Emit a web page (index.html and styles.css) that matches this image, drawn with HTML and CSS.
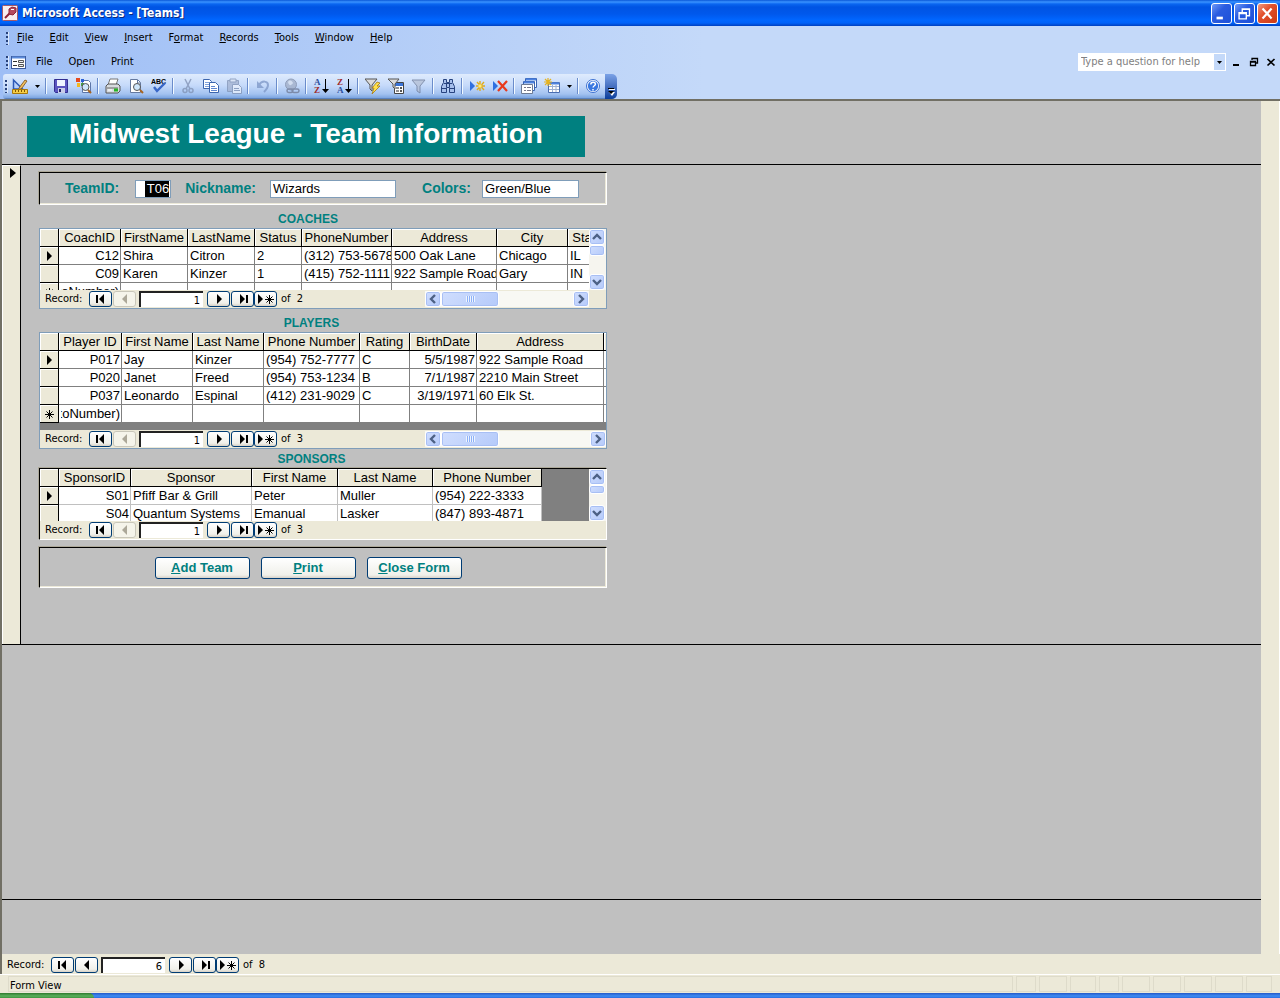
FILE: index.html
```html
<!DOCTYPE html>
<html lang="en">
<head>
<meta charset="utf-8">
<title>Microsoft Access - [Teams]</title>
<link rel="stylesheet" href="styles.css">
</head>
<body>
<svg class="defs" aria-hidden="true">
  <symbol id="first" viewBox="0 0 12 10"><path d="M1 1h2v8H1zM9 0v10L4 5z"/></symbol>
  <symbol id="prev" viewBox="0 0 12 10"><path d="M8 0v10L3 5z"/></symbol>
  <symbol id="next" viewBox="0 0 12 10"><path d="M4 0v10l5-5z"/></symbol>
  <symbol id="last" viewBox="0 0 12 10"><path d="M3 0v10l5-5zM9 1h2v8H9z"/></symbol>
  <symbol id="new" viewBox="0 0 18 10"><path d="M1 0v10l5-5z"/><path d="M12.500 1v9M8 5.500h9M9.500 2.500l6 6M15.500 2.500l-6 6" fill="none" stroke="#000"/></symbol>
  <symbol id="star" viewBox="0 0 12 10"><path d="M6.500 1v9M2 5.500h9M3.500 2.500l6 6M9.500 2.500l-6 6" fill="none" stroke="#000"/></symbol>
  <symbol id="up" viewBox="0 0 10 10"><path d="M1 7l4-4 4 4" fill="none" stroke="#4d6185" stroke-width="2.4"/></symbol>
  <symbol id="down" viewBox="0 0 10 10"><path d="M1 3l4 4 4-4" fill="none" stroke="#4d6185" stroke-width="2.4"/></symbol>
  <symbol id="left" viewBox="0 0 10 10"><path d="M7 1L3 5l4 4" fill="none" stroke="#4d6185" stroke-width="2.4"/></symbol>
  <symbol id="right" viewBox="0 0 10 10"><path d="M3 1l4 4-4 4" fill="none" stroke="#4d6185" stroke-width="2.4"/></symbol>
  <symbol id="drop" viewBox="0 0 5 3"><path d="M0 0h5L2.500 3z"/></symbol>
  <symbol id="funnel" viewBox="0 0 16 16"><path d="M1 2h13L9 8v7l-3-2V8z" stroke-width="1"/></symbol>
</svg>

<header class="titlebar">
  <svg class="app-icon" viewBox="0 0 16 16"><rect x=".5" y=".5" width="15" height="15" rx="1" fill="#f7eef0" stroke="#a55a68"/><path d="M8 8l-5 5" stroke="#8e2238" stroke-width="2"/><path d="M7 4l3-2 4 1v4l-3 3-4-1z" fill="#b44a5e" stroke="#8e2238"/><path d="M9 4.500h3" stroke="#fff"/></svg>
  <h1 class="window-title">Microsoft Access - [Teams]</h1>
  <div class="window-buttons">
    <button class="win" aria-label="Minimize"><svg viewBox="0 0 21 21"><path d="M5 14h7v3H5z" fill="#fff"/></svg></button>
    <button class="win" aria-label="Restore"><svg viewBox="0 0 21 21"><path d="M8 9V5.500h8V13h-3M8 6h8M4.500 9.500h8v7h-8zM4 10.500h9" fill="none" stroke="#fff" stroke-width="1.500"/></svg></button>
    <button class="win close" aria-label="Close"><svg viewBox="0 0 21 21"><path d="M5 5l10 11M15 5L5 16" stroke="#fff" stroke-width="2.400"/></svg></button>
  </div>
</header>

<div class="bars">
  <nav class="menu">
    <span class="grip"></span>
    <button><u>F</u>ile</button><button><u>E</u>dit</button><button><u>V</u>iew</button><button><u>I</u>nsert</button><button>F<u>o</u>rmat</button><button><u>R</u>ecords</button><button><u>T</u>ools</button><button><u>W</u>indow</button><button><u>H</u>elp</button>
  </nav>
  <nav class="menu second">
    <span class="grip"></span>
    <svg class="form-icon" viewBox="0 0 15 13"><rect x=".5" y=".5" width="14" height="12" fill="#fff" stroke="#3c5a9c"/><path d="M1 1.500h13" stroke="#5c8cdc" stroke-width="2"/><path d="M2 5.500h4M2 9.500h4" stroke="#333"/><path d="M7.500 4.500h5v2h-5zM7.500 8.500h5v2h-5z" fill="#eee" stroke="#555"/></svg>
    <button>File</button><button>Open</button><button>Print</button>
    <div class="help-box"><input type="text" aria-label="Help question" placeholder="Type a question for help"><button aria-label="Show questions"><svg class="drop"><use href="#drop"/></svg></button></div>
    <div class="doc-buttons">
      <button aria-label="Minimize form"><svg viewBox="0 0 10 10"><path d="M1 7h6v2H1z"/></svg></button>
      <button aria-label="Restore form"><svg viewBox="0 0 10 10"><path d="M3 3V1.500h5.500V6H7M3 1.500h6M1.500 4.500h5v4h-5zM1 5h6" fill="none" stroke="#000" stroke-width="1.300"/></svg></button>
      <button aria-label="Close form"><svg viewBox="0 0 10 10"><path d="M1.500 2l7 6.500M8.500 2l-7 6.500" stroke="#000" stroke-width="1.700"/></svg></button>
    </div>
  </nav>
  <div class="toolrow">
    <div class="toolbar">
      <span class="grip"></span>
      <button aria-label="Design view"><svg viewBox="0 0 16 16"><path d="M1.500 2v9h9z" fill="#b8d0f8" stroke="#2c58b8" stroke-width="1.500"/><path d="M7 10l6-8 2 1-5 7-3 2z" fill="#f0c060" stroke="#7a4a10" stroke-width=".8"/><path d="M.5 11.500h15v4H.5z" fill="#f5cd45" stroke="#a87808"/><path d="M3.500 12v2M6.500 12v2M9.500 12v2M12.500 12v2" stroke="#805500"/></svg></button>
      <button class="arrow" aria-label="View choices"><svg class="drop"><use href="#drop"/></svg></button>
      <span class="sep"></span>
      <button aria-label="Save"><svg viewBox="0 0 16 16"><path d="M1.500 1.500h13v13h-12l-1-1z" fill="#5a55c0" stroke="#332e91"/><path d="M4 2h8v6H4z" fill="#eef3ff"/><path d="M5 10h7v5H5z" fill="#c8cce8"/><path d="M6 11h2v3H6z" fill="#28246c"/></svg></button>
      <button aria-label="File search"><svg viewBox="0 0 16 16"><path d="M6.500 2.500h6l2 2v10h-8z" fill="#fff" stroke="#5d76a8"/><path d="M0 0h4v4H0z" fill="#e64a1e"/><path d="M5 1h3v3H5z" fill="#2c62d4"/><path d="M1 5h3v4H1z" fill="#f3b91f"/><path d="M5 5h3v3H5z" fill="#46a045"/><circle cx="9.500" cy="9" r="3.500" fill="#cfe6fb" stroke="#555"/><path d="M12 12l3 3" stroke="#a66420" stroke-width="2"/></svg></button>
      <span class="sep"></span>
      <button aria-label="Print"><svg viewBox="0 0 16 16"><path d="M5 1h8l-2 6H3z" fill="#fff" stroke="#777"/><path d="M1 8l2-2h10l2 2v5l-2 2H1z" fill="#d7dbdf" stroke="#555"/><path d="M2 10h11" stroke="#666"/><path d="M9 12h4" stroke="#27b427" stroke-width="3"/><path d="M3 12h4" stroke="#fff"/></svg></button>
      <button aria-label="Print preview"><svg viewBox="0 0 16 16"><path d="M2.500 1.500h7l3 3v10h-10z" fill="#fff" stroke="#65799f"/><path d="M9.500 2v3h3" fill="none" stroke="#65799f"/><circle cx="9" cy="9" r="3.500" fill="#cfe6fb" stroke="#555"/><path d="M12 12l3 3" stroke="#a66420" stroke-width="2"/></svg></button>
      <button aria-label="Spelling"><svg viewBox="0 0 16 16"><text x="0" y="6" class="abc">ABC</text><path d="M3 9l3 4 8-8" fill="none" stroke="#3867c8" stroke-width="2.400"/></svg></button>
      <span class="sep"></span>
      <button class="off" aria-label="Cut"><svg viewBox="0 0 16 16" fill="none" stroke="#7f90b2" stroke-width="1.500"><path d="M5 1l5 10M11 1L6 11"/><circle cx="5" cy="12.500" r="2"/><circle cx="11" cy="12.500" r="2"/></svg></button>
      <button aria-label="Copy"><svg viewBox="0 0 16 16" fill="#fff" stroke="#3c65ad"><path d="M.5 1.500h6l2 2v7h-8z"/><path d="M2 4.500h4M2 6.500h5M2 8.500h4" stroke="#7fa1dc"/><path d="M6.500 4.500h6l3 3v7h-9z"/><path d="M8 8.500h4M8 10.500h6M8 12.500h6" stroke="#5f87d0"/></svg></button>
      <button class="off" aria-label="Paste"><svg viewBox="0 0 16 16" stroke="#7f90b2"><path d="M1.500 2.500h11v11h-11z" fill="#a3b2cf"/><path d="M4 1h6v3H4z" fill="#dde5f3"/><path d="M6.500 6.500h6l3 3v6h-9z" fill="#edf2fb"/><path d="M8 10.500h5M8 12.500h6"/></svg></button>
      <span class="sep"></span>
      <button class="off" aria-label="Undo"><svg viewBox="0 0 16 16"><path d="M4 7c3-5 9-4 9 0 0 3-2 5-4 7" fill="none" stroke="#7c96c6" stroke-width="2"/><path d="M2 3v7h7z" fill="#7c96c6"/></svg></button>
      <span class="sep"></span>
      <button class="off" aria-label="Hyperlink"><svg viewBox="0 0 16 16"><circle cx="7" cy="6.500" r="5.500" fill="#a0adc6" stroke="#7c89a5"/><path d="M4 4c2-3 4-1 5 1-2 3-4 3-5-1" fill="#d5deed"/><g fill="none" stroke="#6d7791" stroke-width="1.500"><rect x="3" y="11" width="6" height="3.500" rx="1.700"/><rect x="8" y="11" width="7" height="3.500" rx="1.700"/></g></svg></button>
      <span class="sep"></span>
      <button aria-label="Sort ascending"><svg class="sort" viewBox="0 0 16 18"><text x="1" y="8" class="letter blue">A</text><text x="1" y="16" class="letter red">Z</text><path d="M12 2v10h-3l3.500 4L16 12h-3V2z"/></svg></button>
      <button aria-label="Sort descending"><svg class="sort" viewBox="0 0 16 18"><text x="1" y="8" class="letter red">Z</text><text x="1" y="16" class="letter blue">A</text><path d="M12 2v10h-3l3.500 4L16 12h-3V2z"/></svg></button>
      <span class="sep"></span>
      <button aria-label="Filter by selection"><svg viewBox="0 0 16 16"><path d="M0 1h12L7 7v6l-2-2V7z" fill="#dcdcdc" stroke="#555"/><path d="M12 4l3 1-3 3h3l-8 8 2-6H7z" fill="#ffe14a" stroke="#a87b12" stroke-width=".8"/></svg></button>
      <button aria-label="Filter by form"><svg viewBox="0 0 16 16"><path d="M6.500 4.500h9v11h-9z" fill="#fff" stroke="#444"/><path d="M7 5h8v3H7z" fill="#3973d8"/><path d="M8 10h3M8 13h3" stroke="#222"/><path d="M12 9h2v2h-2zM12 12h2v2h-2z" fill="#555"/><path d="M0 1h11L7 6v5L5 9V6z" fill="#dcdcdc" stroke="#555"/></svg></button>
      <button class="off" aria-label="Apply filter"><svg viewBox="0 0 16 16" fill="#b4bfd4" stroke="#6b7895"><use href="#funnel"/></svg></button>
      <span class="sep"></span>
      <button aria-label="Find"><svg viewBox="0 0 16 16" fill="#a6bfec" stroke="#27437f"><path d="M3.500 1.500h3v3h3v-3h3v3l2 4v6h-5v-5h-3v5h-5v-6l2-4z"/><path d="M2 10.500h4M10 10.500h4M4 5.500h8M6.500 9V5M9.500 9V5"/></svg></button>
      <span class="sep"></span>
      <button aria-label="New record"><svg viewBox="0 0 16 16"><path d="M1 3v10l5-5z" fill="#2f6fe0"/><path d="M11 3v10M7 8h9M8 4l7 8M15 4l-7 8" stroke="#e0ac1c" stroke-width="1.400"/><path d="M9.500 6.500h3v3h-3z" fill="#ffe97a"/></svg></button>
      <button aria-label="Delete record"><svg viewBox="0 0 16 16"><path d="M1 3v10l5-5z" fill="#2f6fe0"/><path d="M6 3l9 10M15 3L6 13" stroke="#e8391e" stroke-width="2.200"/></svg></button>
      <span class="sep"></span>
      <button aria-label="Database window"><svg viewBox="0 0 16 16" fill="#fff" stroke="#3964b4"><path d="M4.500.5h11v9h-11z"/><path d="M5 1.500h10" stroke="#4d82e0" stroke-width="2"/><path d="M2.500 3.500h11v9h-11z"/><path d="M.5 6.500h11v9H.5z" stroke="#6d7b94"/><path d="M3 4.500h10" stroke="#4d82e0" stroke-width="2"/><path d="M3 9.500h2M6 9.500h4M3 12.500h2M6 12.500h4" stroke="#778"/></svg></button>
      <button aria-label="New object"><svg viewBox="0 0 16 16"><path d="M4.500 4.500h11v10h-11z" fill="#fff" stroke="#4a6db0"/><path d="M5 5.500h10" stroke="#4d82e0" stroke-width="2"/><path d="M5 8.500h10M5 11.500h10M8.500 7v7M12 7v7" stroke="#9eb0d0"/><path d="M4 0v8M0 4h8M1 1l6 6M7 1L1 7" stroke="#e6b321" stroke-width="1.200"/></svg></button>
      <button class="arrow" aria-label="Object choices"><svg class="drop"><use href="#drop"/></svg></button>
      <span class="sep"></span>
      <button aria-label="Help"><svg viewBox="0 0 16 16"><circle cx="8" cy="8" r="6.500" fill="#fff" stroke="#3a6fd0"/><circle cx="8" cy="8" r="5.200" fill="#3a78e0"/><path d="M5.800 6.500c0-3 4.600-3 4.600-.3 0 1.500-2.300 1.600-2.300 3.300M8 11v1.600" fill="none" stroke="#fff" stroke-width="1.500"/></svg></button>
      <button class="cap" aria-label="Toolbar options"><svg viewBox="0 0 7 8"><path d="M1 1h6v1H1zM1 4h6L4 8z" fill="#fff"/><path d="M0 0h6v1H0zM0 3h6L3 6z"/></svg></button>
    </div>
  </div>
</div>

<main class="workspace">
  <div class="canvas">
    <section class="form-header"><h2 class="banner">Midwest League - Team Information</h2></section>
    <section class="detail">
      <div class="selector"><svg viewBox="0 0 12 10"><path d="M4 0v10l6-5z"/></svg></div>
      <form class="team">
        <div class="panel fields">
          <label for="team-id">TeamID:</label>
          <span class="field id"><input id="team-id" value="T06"></span>
          <label for="nick">Nickname:</label>
          <input class="field nick" id="nick" value="Wizards">
          <label for="colors">Colors:</label>
          <input class="field colors" id="colors" value="Green/Blue">
        </div>

        <h3>COACHES</h3>
        <div class="sub coaches">
          <div class="sheet">
            <div class="clip">
              <table>
                <colgroup><col class="c19"><col class="c62"><col class="c67"><col class="c67"><col class="c47"><col class="c90"><col class="c105"><col class="c71"><col class="c40"></colgroup>
                <tr><th></th><th>CoachID</th><th>FirstName</th><th>LastName</th><th>Status</th><th>PhoneNumber</th><th>Address</th><th>City</th><th>State</th></tr>
                <tr><th><svg class="mark"><use href="#next"/></svg></th><td class="num">C12</td><td>Shira</td><td>Citron</td><td>2</td><td>(312) 753-5678</td><td>500 Oak Lane</td><td>Chicago</td><td>IL</td></tr>
                <tr><th></th><td class="num">C09</td><td>Karen</td><td>Kinzer</td><td>1</td><td>(415) 752-1111</td><td>922 Sample Road</td><td>Gary</td><td>IN</td></tr>
                <tr><th><svg class="mark"><use href="#star"/></svg></th><td class="num"><span class="auto">(AutoNumber)</span></td><td></td><td></td><td></td><td></td><td></td><td></td><td></td></tr>
              </table>
            </div>
            <div class="vscroll"><button type="button" aria-label="Scroll up"><svg><use href="#up"/></svg></button><span class="thumb"></span><button type="button" class="end" aria-label="Scroll down"><svg><use href="#down"/></svg></button></div>
          </div>
          <div class="nav">
            <label for="rec1">Record:</label>
            <button type="button" aria-label="First"><svg><use href="#first"/></svg></button><button type="button" disabled aria-label="Previous"><svg><use href="#prev"/></svg></button>
            <input id="rec1" value="1">
            <button type="button" aria-label="Next"><svg><use href="#next"/></svg></button><button type="button" aria-label="Last"><svg><use href="#last"/></svg></button><button type="button" class="new" aria-label="New"><svg><use href="#new"/></svg></button>
            <span class="of">of&nbsp; 2</span>
            <div class="hscroll"><button type="button" aria-label="Scroll left"><svg><use href="#left"/></svg></button><span class="thumb"></span><button type="button" class="end" aria-label="Scroll right"><svg><use href="#right"/></svg></button></div>
          </div>
        </div>

        <h3>PLAYERS</h3>
        <div class="sub players">
          <div class="sheet">
            <div class="clip">
              <table>
                <colgroup><col class="c19"><col class="c63"><col class="c71"><col class="c71"><col class="c96"><col class="c50"><col class="c67"><col class="c127"><col class="c50"></colgroup>
                <tr><th></th><th>Player ID</th><th>First Name</th><th>Last Name</th><th>Phone Number</th><th>Rating</th><th>BirthDate</th><th>Address</th><th></th></tr>
                <tr><th><svg class="mark"><use href="#next"/></svg></th><td class="num">P017</td><td>Jay</td><td>Kinzer</td><td>(954) 752-7777</td><td>C</td><td class="num">5/5/1987</td><td>922 Sample Road</td><td></td></tr>
                <tr><th></th><td class="num">P020</td><td>Janet</td><td>Freed</td><td>(954) 753-1234</td><td>B</td><td class="num">7/1/1987</td><td>2210 Main Street</td><td></td></tr>
                <tr><th></th><td class="num">P037</td><td>Leonardo</td><td>Espinal</td><td>(412) 231-9029</td><td>C</td><td class="num">3/19/1971</td><td>60 Elk St.</td><td></td></tr>
                <tr><th><svg class="mark"><use href="#star"/></svg></th><td class="num"><span class="auto">(AutoNumber)</span></td><td></td><td></td><td></td><td></td><td></td><td></td><td></td></tr>
              </table>
            </div>
          </div>
          <div class="nav">
            <label for="rec2">Record:</label>
            <button type="button" aria-label="First"><svg><use href="#first"/></svg></button><button type="button" disabled aria-label="Previous"><svg><use href="#prev"/></svg></button>
            <input id="rec2" value="1">
            <button type="button" aria-label="Next"><svg><use href="#next"/></svg></button><button type="button" aria-label="Last"><svg><use href="#last"/></svg></button><button type="button" class="new" aria-label="New"><svg><use href="#new"/></svg></button>
            <span class="of">of&nbsp; 3</span>
            <div class="hscroll"><button type="button" aria-label="Scroll left"><svg><use href="#left"/></svg></button><span class="thumb"></span><button type="button" class="end" aria-label="Scroll right"><svg><use href="#right"/></svg></button></div>
          </div>
        </div>

        <h3>SPONSORS</h3>
        <div class="sub sponsors">
          <div class="sheet">
            <div class="clip">
              <table>
                <colgroup><col class="c19"><col class="c72"><col class="c121"><col class="c86"><col class="c95"><col class="c109"></colgroup>
                <tr><th></th><th>SponsorID</th><th>Sponsor</th><th>First Name</th><th>Last Name</th><th>Phone Number</th></tr>
                <tr><th><svg class="mark"><use href="#next"/></svg></th><td class="num">S01</td><td>Pfiff Bar &amp; Grill</td><td>Peter</td><td>Muller</td><td>(954) 222-3333</td></tr>
                <tr><th></th><td class="num">S04</td><td>Quantum Systems</td><td>Emanual</td><td>Lasker</td><td>(847) 893-4871</td></tr>
              </table>
            </div>
            <div class="vscroll"><button type="button" aria-label="Scroll up"><svg><use href="#up"/></svg></button><span class="thumb"></span><button type="button" class="end" aria-label="Scroll down"><svg><use href="#down"/></svg></button></div>
          </div>
          <div class="nav">
            <label for="rec3">Record:</label>
            <button type="button" aria-label="First"><svg><use href="#first"/></svg></button><button type="button" disabled aria-label="Previous"><svg><use href="#prev"/></svg></button>
            <input id="rec3" value="1">
            <button type="button" aria-label="Next"><svg><use href="#next"/></svg></button><button type="button" aria-label="Last"><svg><use href="#last"/></svg></button><button type="button" class="new" aria-label="New"><svg><use href="#new"/></svg></button>
            <span class="of">of&nbsp; 3</span>
          </div>
        </div>

        <div class="panel actions">
          <button type="button"><u>A</u>dd Team</button>
          <button type="button"><u>P</u>rint</button>
          <button type="button"><u>C</u>lose Form</button>
        </div>
      </form>
    </section>
    <section class="form-footer"></section>
    <section class="rest"></section>
  </div>
  <div class="gutter"></div>
</main>

<div class="nav main-nav">
  <label for="rec0">Record:</label>
  <button aria-label="First"><svg><use href="#first"/></svg></button><button aria-label="Previous"><svg><use href="#prev"/></svg></button>
  <input id="rec0" value="6">
  <button aria-label="Next"><svg><use href="#next"/></svg></button><button aria-label="Last"><svg><use href="#last"/></svg></button><button class="new" aria-label="New"><svg><use href="#new"/></svg></button>
  <span class="of">of&nbsp; 8</span>
</div>
<footer class="status">
  <span class="message">Form View</span>
  <span class="cell s"></span><span class="cell l"></span><span class="cell m"></span><span class="cell s"></span><span class="cell l"></span><span class="cell l"></span><span class="cell l"></span><span class="cell l"></span><span class="cell m"></span>
</footer>
<div class="taskbar"><span class="start"></span></div>
</body>
</html>
```
FILE: styles.css
```css
* { box-sizing: border-box; }
body {
  margin: 0;
  min-height: 100vh;
  display: flex;
  flex-direction: column;
  background: #ece9d8;
  color: #000;
  font: 11px/14px "DejaVu Sans Condensed", "DejaVu Sans", sans-serif;
}
button, input { font: inherit; color: inherit; margin: 0; padding: 0; border: 0; border-radius: 0; background: none; }
svg { display: block; }
h1, h2, h3 { margin: 0; }
.defs { position: absolute; width: 0; height: 0; }
.drop { width: 5px; height: 3px; }

/* Title bar */
.titlebar {
  height: 26px;
  display: flex;
  align-items: center;
  gap: 4px;
  padding: 0 2px;
  background: linear-gradient(#0a58d8 0, #3a93ff 2px, #0a66f0 4px, #0054e3 7px, #0058ec 14px, #0066ff 20px, #0062f8 23px, #0040c0 26px);
}
.app-icon { width: 16px; height: 16px; }
.window-title { color: #fff; font: bold 12px/16px "DejaVu Sans Condensed", sans-serif; text-shadow: 1px 1px #0a2a80; }
.window-buttons { margin-left: auto; display: flex; gap: 2px; }
.win {
  width: 21px;
  height: 21px;
  border: 1px solid #fff;
  border-radius: 3px;
  background: linear-gradient(135deg, #6f9af8, #2a5ce0 40%, #1d50d8);
}
.win svg { width: 19px; height: 19px; }
.close { background: linear-gradient(135deg, #f09a80, #e2502c 40%, #cc3a14); }

/* Menus and toolbar */
.bars { background: linear-gradient(90deg, #9ebef5, #c4d9f9 55%); border-bottom: 2px solid #716f64; }
.menu { height: 24px; display: flex; align-items: center; padding-left: 6px; }
.second { padding-right: 4px; }
.menu > button { padding: 0 8px; }
.grip { width: 3px; height: 13px; background: repeating-linear-gradient(#27417a 0 2px, transparent 2px 4px); border-right: 1px solid #dce8fb; }
.form-icon { width: 15px; height: 13px; margin: 0 2px; }
.help-box { margin-left: auto; display: flex; width: 148px; height: 18px; background: #fff; border: 1px solid #fff; }
.help-box input { flex: 1; min-width: 0; padding-left: 2px; }
.help-box input::placeholder { color: #808080; opacity: 1; }
.help-box button { width: 11px; display: grid; place-items: center; background: #c4d9f9; }
.doc-buttons { display: flex; gap: 7px; margin-left: 6px; }
.doc-buttons svg { width: 10px; height: 10px; }
.toolrow { height: 25px; display: flex; padding-left: 3px; }
.toolbar {
  display: flex;
  align-items: flex-start;
  padding-left: 2px;
  border-radius: 3px 5px 5px 3px;
  overflow: hidden;
  background: linear-gradient(#dfebfd, #c6dafa 45%, #a3c2f0 80%, #7ba4e0 96%, #3b619c);
}
.toolbar .grip { margin-top: 6px; }
.toolbar button { width: 23px; height: 24px; display: grid; place-items: center; }
.toolbar button svg { width: 16px; height: 16px; }
.toolbar button .sort { height: 18px; }
.toolbar .arrow { width: 12px; }
.toolbar .arrow .drop { width: 5px; height: 3px; }
.sep { width: 6px; height: 16px; margin-top: 4px; background: linear-gradient(90deg, transparent 2px, #6a8ccb 2px 3px, #f1f9ff 3px 4px, transparent 4px); }
.off { opacity: .75; }
.abc { font: bold 7px "Liberation Sans", sans-serif; }
.letter { font: bold 9px "Liberation Serif", serif; }
.blue { fill: #2c4f9e; }
.red { fill: #a02c2c; }
.toolbar .cap { width: 12px; height: 25px; margin-left: 1px; padding-bottom: 3px; align-items: end; background: linear-gradient(#7ba2e7, #3c66b8 60%, #0a3d9a); }
.toolbar .cap svg { width: 7px; height: 8px; }

/* Form area */
.workspace { flex: 1; display: flex; border-left: 2px solid #716f64; }
.canvas { flex: 1; display: flex; flex-direction: column; background: #c0c0c0; }
.gutter { width: 19px; background: #ece9d8; border-right: 1px solid #fff; }
.form-header { padding: 15px 25px 7px; border-bottom: 1px solid #000; }
.banner { width: 558px; background: #008080; color: #fff; text-align: center; font: bold 28px/36px "Liberation Sans", Arial, sans-serif; padding-bottom: 5px; }
.detail { display: flex; border-bottom: 1px solid #000; }
.selector { width: 19px; padding: 2px 0 0 3px; background: #ece9d8; border-left: 1px solid #fff; border-top: 1px solid #fff; border-right: 1px solid #000; }
.selector svg { width: 12px; height: 10px; }
.team { width: 586px; padding: 7px 0 56px 18px; font: 13px/17px "Liberation Sans", Arial, sans-serif; }
.form-footer { height: 255px; border-bottom: 1px solid #000; }
.rest { flex: 1; }
.panel { border: 1px solid #fff; border-top-color: #000; border-left-color: #000; box-shadow: -1px -1px #aca899, inset -1px -1px #ece9d8; display: flex; align-items: center; }
.fields { height: 33px; padding-left: 25px; }
.fields label { color: #008080; font-size: 14px; font-weight: bold; }
.field { height: 18px; border: 1px solid #7f9db9; background: #fff; padding: 0 2px; }
.id { width: 36px; margin: 0 14px 0 16px; display: flex; justify-content: flex-end; padding: 0 1px; }
.id input { width: 24px; background: #000; color: #fff; text-align: right; }
.nick { width: 126px; margin: 0 26px 0 14px; }
.colors { width: 97px; margin-left: 11px; }
.team h3 { color: #008080; font-size: 12px; line-height: 18px; text-align: center; padding-right: 30px; }
.fields + h3 { padding-top: 5px; }
.coaches + h3, .players + h3 { padding-right: 23px; }
.coaches + h3 { padding-top: 5px; }
.players + h3 { padding-top: 1px; }

/* Subform datasheets */
.sub { border: 1px solid #7f9db9; background: #ece9d8; }
.sheet { display: flex; background: #808080; overflow: hidden; }
.clip { flex: 1; min-width: 0; overflow: hidden; }
.coaches .sheet { height: 61px; }
.players .sheet { height: 97px; }
.sponsors .sheet { height: 52px; }
.sponsors { border-color: #000 #fff #fff #000; box-shadow: -1px -1px #aca899; }
.sub table { table-layout: fixed; width: 0; border-collapse: separate; border-spacing: 0; }
.sub tr { height: 18px; }
.sub td, .sub th { height: 18px; padding: 0 0 0 2px; line-height: 17px; font-weight: normal; white-space: nowrap; overflow: hidden; }
.sub td { background: #fff; border-right: 1px solid #808080; border-bottom: 1px solid #808080; }
.sub th { padding: 0; text-align: center; background: #ece9d8; border-right: 1px solid #000; border-bottom: 1px solid #000; box-shadow: inset 1px 1px #fff; }
.sponsors td { border-color: #c0c0c0; }
.sub td.num { text-align: right; padding: 0 1px 0 2px; }
.auto { display: flex; justify-content: flex-end; overflow: hidden; }
.mark { width: 12px; height: 10px; margin: 0 auto; }
.c19 { width: 19px; } .c40 { width: 40px; } .c47 { width: 47px; } .c50 { width: 50px; } .c62 { width: 62px; } .c63 { width: 63px; }
.c67 { width: 67px; } .c71 { width: 71px; } .c72 { width: 72px; } .c86 { width: 86px; } .c90 { width: 90px; }
.c95 { width: 95px; } .c96 { width: 96px; } .c105 { width: 105px; } .c109 { width: 109px; } .c121 { width: 121px; } .c127 { width: 127px; }

/* Scroll bars */
.vscroll { width: 17px; display: flex; flex-direction: column; background: #f6f5ef; }
.hscroll { margin-left: auto; display: flex; height: 16px; width: 164px; background: #f8f8f4; }
.coaches .hscroll { margin-right: 17px; }
.players .hscroll { width: 181px; }
.vscroll button, .hscroll button, .thumb {
  flex: none;
  display: grid;
  place-items: center;
  border: 1px solid #fff;
  border-radius: 3px;
  background: linear-gradient(135deg, #d0defe, #b5cafa);
  box-shadow: inset 0 0 0 1px #a8bff4;
}
.vscroll button, .hscroll button { width: 16px; height: 16px; }
.vscroll svg, .hscroll svg { width: 10px; height: 10px; }
.vscroll .thumb { width: 16px; height: 11px; }
.sponsors .thumb { height: 9px; }
.vscroll .end { margin-top: auto; }
.hscroll .end { margin-left: auto; }
.hscroll .thumb { width: 58px; height: 16px; }
.hscroll .thumb::before { content: ""; width: 9px; height: 6px; background: repeating-linear-gradient(90deg, #eef4fe 0 1px, #8cb0f8 1px 2px); }

/* Record navigation */
.nav { height: 18px; display: flex; align-items: center; padding-left: 5px; font: 11px/14px "DejaVu Sans Condensed", "DejaVu Sans", sans-serif; }
.nav label { width: 44px; }
.nav > button {
  width: 23px;
  height: 16px;
  margin-right: 1px;
  display: grid;
  place-items: center;
  border: 1px solid #003c74;
  border-radius: 3px;
  background: linear-gradient(#fff, #f0f0ea 80%, #d6d0c5);
}
.nav > button svg { width: 12px; height: 10px; }
.nav > .new { margin-left: -1px; }
.nav > .new svg { width: 18px; }
.nav > button:disabled { border-color: #c9c7ba; background: #f5f4ea; fill: #aca899; }
.nav input { width: 64px; height: 16px; margin: 0 4px 0 2px; padding-right: 3px; text-align: right; background: #fff; border-top: 2px solid #222; border-left: 2px solid #222; }
.of { margin-left: 3px; }

/* Command buttons */
.actions { height: 41px; margin-top: 7px; gap: 11px; justify-content: center; padding-right: 30px; }
.actions button {
  width: 95px;
  height: 22px;
  border: 1px solid #003c74;
  border-radius: 3px;
  background: linear-gradient(#fff, #f0f0ea 85%, #d8d2c8);
  color: #008080;
  font-weight: bold;
}

/* Bottom bars */
.main-nav { height: 20px; padding-top: 2px; border-left: 2px solid #716f64; }
.status { height: 19px; display: flex; gap: 3px; padding: 1px 8px; border-top: 1px solid #fff; }
.message { flex: 1; padding: 2px 1px 0; border: 1px solid #dedbca; }
.cell { border: 1px solid #dedbca; }
.s { width: 20px; }
.m { width: 26px; }
.l { width: 28px; }
.taskbar { height: 5px; background: linear-gradient(#2458c8, #3f8cf3 60%, #2a6de0); }
.start { display: block; width: 94px; height: 5px; border-radius: 0 5px 0 0; background: linear-gradient(#2f7a30, #5cb05c 60%, #3f9440); }
```
